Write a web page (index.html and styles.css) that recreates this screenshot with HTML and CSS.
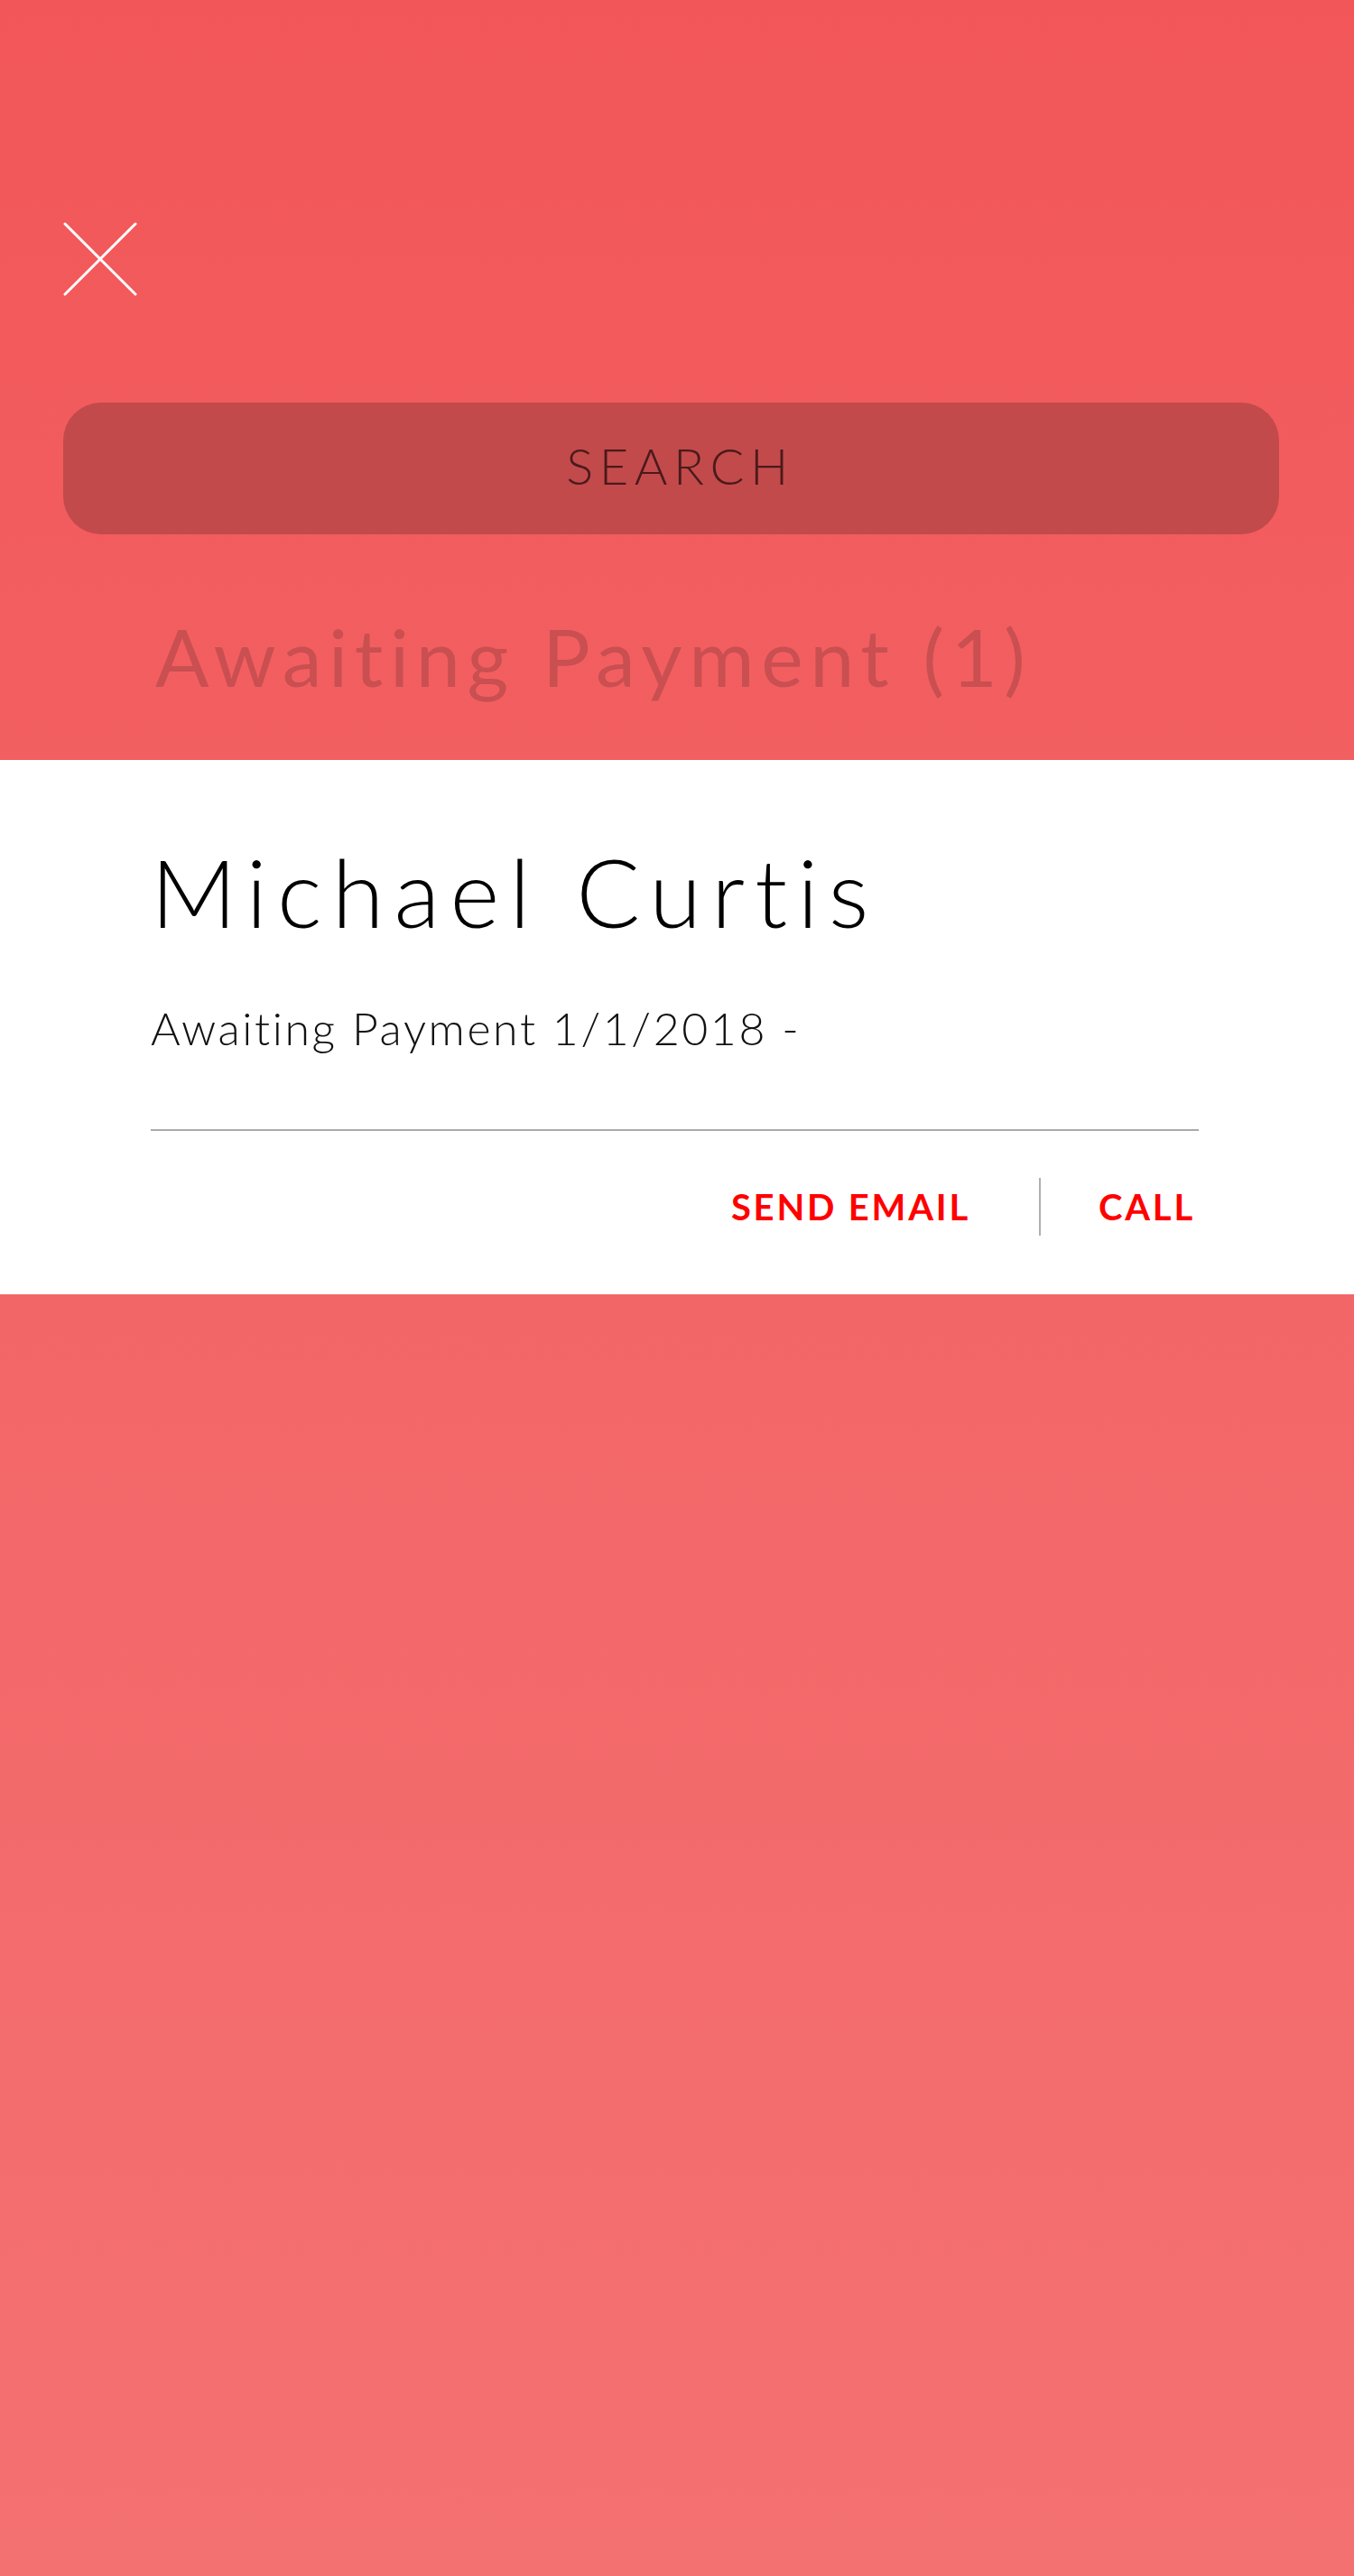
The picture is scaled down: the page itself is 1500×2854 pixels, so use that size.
FILE: index.html
```html
<!DOCTYPE html>
<html lang="en">
<head>
<meta charset="utf-8">
<title>Awaiting Payment</title>
<link rel="stylesheet" href="styles.css">
</head>
<body>
<div class="screen">
  <header class="top">
    <button class="close" aria-label="Close">
      <svg width="82" height="82" viewBox="0 0 82 82"><path d="M2 2 L80 80 M80 2 L2 80" stroke="#fff" stroke-width="3" stroke-linecap="round" fill="none"/></svg>
    </button>
  </header>
  <div class="search">SEARCH</div>
  <h1 class="section-title">Awaiting Payment (1)</h1>
  <section class="card">
    <h2 class="name">Michael Curtis</h2>
    <p class="status">Awaiting Payment 1/1/2018 -</p>
    <div class="rule"></div>
    <div class="actions">
      <span class="action">SEND EMAIL</span>
      <span class="divider"></span>
      <span class="action">CALL</span>
    </div>
  </section>
</div>
</body>
</html>
```
FILE: styles.css
```css
html, body {
  margin: 0;
  padding: 0;
}
body {
  width: 1500px;
  height: 2854px;
  background: linear-gradient(180deg, #f25658 0%, #f36668 50%, #f47171 100%);
  font-family: Lato, "Open Sans", sans-serif;
  overflow: hidden;
}
.screen {
  display: flex;
  flex-direction: column;
}
.top {
  padding: 246px 0 0 70px;
  height: 82px;
}
.close {
  display: block;
  width: 82px;
  height: 82px;
  padding: 0;
  border: 0;
  background: none;
}
.close svg { display: block; }
.search {
  margin: 118px 83px 0 70px;
  height: 146px;
  border-radius: 42px;
  background: #c34a4b;
  color: #4a1a1c;
  font-size: 56px;
  font-weight: 300;
  letter-spacing: 6.6px;
  line-height: 140px;
  text-align: center;
  padding-left: 20px;
  box-sizing: border-box;
}
.section-title {
  margin: 91px 0 0 172px;
  font-size: 88px;
  font-weight: 400;
  line-height: 88px;
  letter-spacing: 7.6px;
  color: #c94f51;
}
.card {
  margin-top: 71px;
  background: #fff;
  padding: 93px 172px 64px 167px;
  height: 592px;
  box-sizing: border-box;
}
.name {
  margin: 0;
  font-size: 105px;
  line-height: 105px;
  font-weight: 300;
  letter-spacing: 11.1px;
  color: #000;
}
.status {
  margin: 74px 0 0;
  font-size: 50px;
  line-height: 50px;
  font-weight: 300;
  letter-spacing: 2.6px;
  color: #111;
}
.rule {
  margin-top: 87px;
  height: 2px;
  background: #aaaaaa;
}
.actions {
  margin-top: 52px;
  height: 64px;
  display: flex;
  justify-content: flex-end;
  align-items: center;
  padding-right: 4px;
}
.action {
  font-size: 40px;
  line-height: 40px;
  font-weight: 700;
  letter-spacing: 2.8px;
  color: #ff0000;
}
.divider {
  width: 2px;
  height: 64px;
  background: #b0b0b0;
  margin: 0 64px 0 76px;
}
```
